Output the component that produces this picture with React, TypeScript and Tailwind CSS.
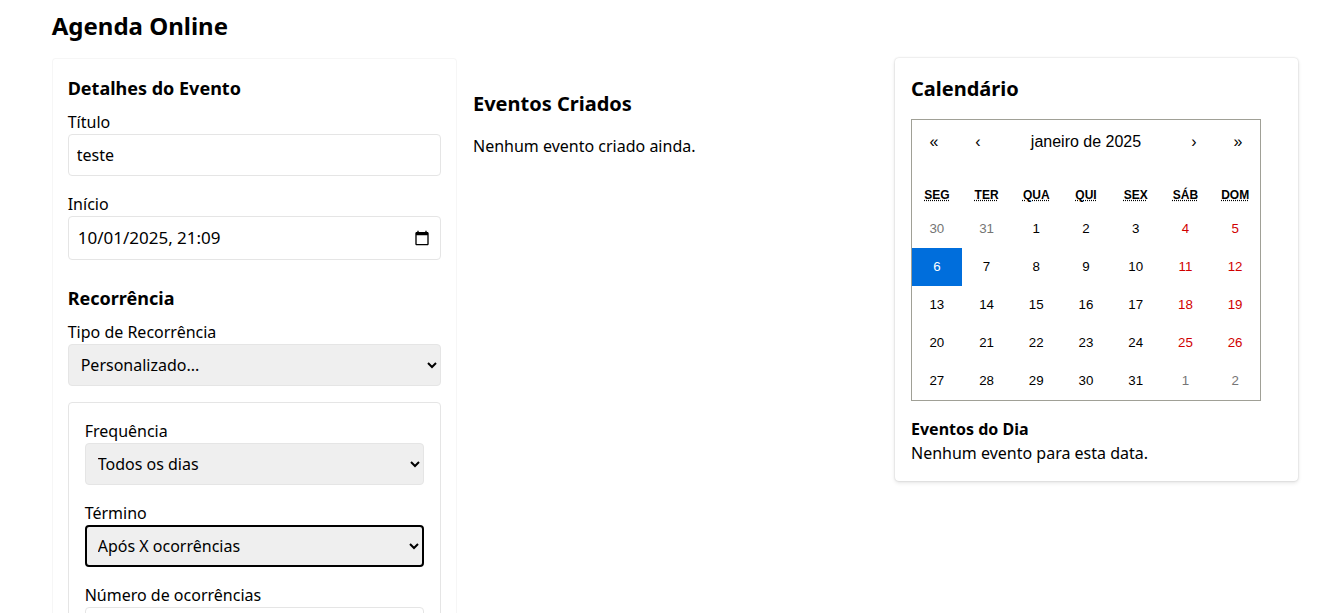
const noto = "font-['Noto_Sans',sans-serif]";

const weekdays = [
  ["SEG", "segunda-feira"],
  ["TER", "terça-feira"],
  ["QUA", "quarta-feira"],
  ["QUI", "quinta-feira"],
  ["SEX", "sexta-feira"],
  ["SÁB", "sábado"],
  ["DOM", "domingo"],
];

const days = [
  30, 31, 1, 2, 3, 4, 5,
  6, 7, 8, 9, 10, 11, 12,
  13, 14, 15, 16, 17, 18, 19,
  20, 21, 22, 23, 24, 25, 26,
  27, 28, 29, 30, 31, 1, 2,
];

function dayClass(index: number) {
  if (index === 7) return "bg-[#006edc] text-white";
  if (index < 2 || index > 32) return "text-[#757575]";
  if (index % 7 >= 5) return "text-[#d10000]";
  return "text-black";
}

function Field({ label, children }: { label: string; children: React.ReactNode }) {
  return (
    <div className="mb-4">
      <label className="block leading-6">{label}</label>
      {children}
    </div>
  );
}

function Select({ value, focused }: { value: string; focused?: boolean }) {
  return (
    <select
      defaultValue={value}
      className={`block w-full h-[42px] rounded bg-[#efefef] text-black appearance-auto ${
        focused ? "px-[7px] border-2 border-black" : "px-2 border border-[#e5e5e5]"
      }`}
    >
      <option>{value}</option>
    </select>
  );
}

function EventForm() {
  return (
    <section className="w-[405.3px] shrink-0 h-[700px] p-4 rounded shadow-[inset_0_0_0_1px_#f6f6f6]">
      <h2 className="text-lg font-bold leading-[29px] mb-[7px]">Detalhes do Evento</h2>
      <Field label="Título">
        <input
          defaultValue="teste"
          className="block w-full h-[42px] px-2 rounded border border-[#e5e5e5] outline-none"
        />
      </Field>
      <Field label="Início">
        <div className="flex items-center justify-between w-full h-[44px] pl-[9px] pr-[10px] rounded border border-[#e5e5e5]">
          <span className="text-[17px]">10/01/2025, 21:09</span>
          <svg width="16" height="16" viewBox="0 0 24 24" fill="currentColor" aria-hidden="true">
            <path d="M20 3h-1V1h-2v2H7V1H5v2H4c-1.1 0-2 .9-2 2v16c0 1.1.9 2 2 2h16c1.1 0 2-.9 2-2V5c0-1.1-.9-2-2-2zm0 18H4V8h16v13z" />
          </svg>
        </div>
      </Field>
      <h3 className="text-lg font-bold leading-[27px] mt-[25px] mb-2">Recorrência</h3>
      <Field label="Tipo de Recorrência">
        <Select value="Personalizado..." />
      </Field>
      <div className="p-4 rounded border border-[#e5e5e5]">
        <Field label="Frequência">
          <Select value="Todos os dias" />
        </Field>
        <Field label="Término">
          <Select value="Após X ocorrências" focused />
        </Field>
        <Field label="Número de ocorrências">
          <input
            type="number"
            defaultValue="1"
            className="block w-full h-[42px] px-2 rounded border border-[#e5e5e5] outline-none"
          />
        </Field>
      </div>
    </section>
  );
}

function EventList() {
  return (
    <section className="w-[406px] shrink-0 pt-[31px]">
      <h2 className="text-xl font-bold leading-[30px] mb-[15px]">Eventos Criados</h2>
      <p className="leading-6">Nenhum evento criado ainda.</p>
    </section>
  );
}

function Calendar() {
  const navButton = "w-11 h-11 shrink-0 text-center";
  return (
    <div className="w-[350px] border border-[#a0a096] font-['Liberation_Sans',Arial,sans-serif] leading-[1.125em]">
      <div className="flex h-11 mb-4">
        <button className={navButton}>«</button>
        <button className={navButton}>‹</button>
        <button className="flex-1 text-center">janeiro de 2025</button>
        <button className={navButton}>›</button>
        <button className={navButton}>»</button>
      </div>
      <div className="grid grid-cols-7 h-[30px] text-xs font-bold items-center text-center">
        {weekdays.map(([short, full]) => (
          <abbr key={short} title={full} className="underline decoration-dotted">
            {short}
          </abbr>
        ))}
      </div>
      <div className="grid grid-cols-7">
        {days.map((day, i) => (
          <button key={i} className={`h-[38px] text-[13.33px] text-center ${dayClass(i)}`}>
            {day}
          </button>
        ))}
      </div>
    </div>
  );
}

function CalendarCard() {
  return (
    <section className="w-[403px] shrink-0 h-[423px] p-4 rounded shadow-[0_0_2px_rgba(0,0,0,0.2),0_2px_4px_rgba(0,0,0,0.1)]">
      <h2 className="text-xl font-bold leading-[30px] mb-[15px]">Calendário</h2>
      <Calendar />
      <div className="mt-4 leading-6">
        <strong className="block font-bold">Eventos do Dia</strong>
        <p>Nenhum evento para esta data.</p>
      </div>
    </section>
  );
}

export default function App() {
  return (
    <div className={`h-[613px] overflow-hidden bg-white text-black pl-[51.7px] pt-2 ${noto}`}>
      <h1 className="text-2xl font-bold leading-9 mb-[14px]">Agenda Online</h1>
      <div className="flex gap-4 items-start">
        <EventForm />
        <EventList />
        <CalendarCard />
      </div>
    </div>
  );
}
